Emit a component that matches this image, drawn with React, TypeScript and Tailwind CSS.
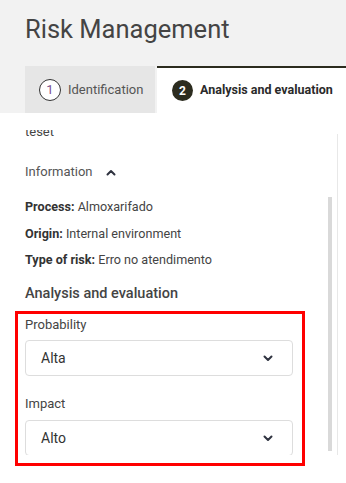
import React from 'react';

const font = { fontFamily: 'Roboto, "Liberation Sans", sans-serif' };

function Chevron({ up = false }: { up?: boolean }) {
  return (
    <svg width="10" height="7" viewBox="0 0 10 7" fill="none" className={up ? 'rotate-180' : ''}>
      <path d="M1.5 1.5L5 5L8.5 1.5" stroke="#2f3340" strokeWidth="2" strokeLinecap="round" strokeLinejoin="round" />
    </svg>
  );
}

function SelectBox({ value }: { value: string }) {
  return (
    <div className="flex h-[36px] w-[268px] items-center justify-between rounded-[4px] border border-[#dddddd] bg-white pl-[15px] pr-[19px]">
      <span className="text-[14px] text-[#333333]">{value}</span>
      <Chevron />
    </div>
  );
}

export default function App() {
  const info = [
    { label: 'Process:', value: 'Almoxarifado' },
    { label: 'Origin:', value: 'Internal environment' },
    { label: 'Type of risk:', value: 'Erro no atendimento' },
  ];

  return (
    <div className="relative h-[483px] w-[346px] overflow-hidden bg-white" style={font}>
      <header className="flex h-[113px] flex-col bg-[#f2f2f2] pl-[25px]">
        <h1 className="mt-[13px] text-[25.5px] leading-[32px] text-[#444444]">Risk Management</h1>
        <div className="mt-auto flex h-[47px] gap-[2px]">
          <div className="flex w-[130px] items-center bg-[#e6e6e6] pl-[14px]">
            <span className="flex h-[22px] w-[22px] items-center justify-center rounded-full border-[1.5px] border-[#333333] bg-white text-[13px] text-[#7a4f8f]">
              1
            </span>
            <span className="ml-[7px] text-[13px] text-[#555555]">Identification</span>
          </div>
          <div className="flex flex-1 items-center border-t-2 border-[#2c2c1f] bg-white pl-[15px]">
            <span className="flex h-[21px] w-[21px] items-center justify-center rounded-full bg-[#2c2c1f] text-[12px] font-bold text-white">
              2
            </span>
            <span className="ml-[7px] whitespace-nowrap text-[12.5px] font-bold text-[#2a2a2a]">
              Analysis and evaluation
            </span>
          </div>
        </div>
      </header>

      <div className="mt-[17px] flex">
        <div className="relative h-[325px] w-[333px] overflow-hidden">
          <div className="-mt-[8px] pl-[25px]">
            <p className="text-[13px] leading-[20px] text-[#444444]">teset</p>

            <div className="mt-[20px] flex h-[20px] items-center gap-[13px]">
              <span className="text-[13px] text-[#555555]">Information</span>
              <Chevron up />
            </div>

            <div className="mt-[15px] flex flex-col gap-[6.5px]">
              {info.map((row) => (
                <p key={row.label} className="text-[12.6px] leading-[20px] text-[#444444]">
                  <span className="font-bold text-[#333333]">{row.label}</span> {row.value}
                </p>
              ))}
            </div>

            <h2 className="mt-[13px] text-[14.5px] font-medium leading-[22px] text-[#444444]">
              Analysis and evaluation
            </h2>

            <p className="mt-[10px] text-[13px] leading-[20px] text-[#444444]">Probability</p>
            <div className="mt-[5px]">
              <SelectBox value="Alta" />
            </div>

            <p className="mt-[18px] text-[13px] leading-[20px] text-[#444444]">Impact</p>
            <div className="mt-[6px]">
              <SelectBox value="Alto" />
            </div>
          </div>
          <div className="absolute left-[328px] top-[67px] h-[254px] w-[4px] bg-[#d9d9d9]" />
        </div>
        <div className="ml-[4px] mt-[4px] h-[321px] w-px bg-[#e8e8e8]" />
      </div>

      <div className="pointer-events-none absolute left-[15px] top-[311px] h-[155px] w-[290px] border-[3px] border-[#ff0000]" />
    </div>
  );
}
